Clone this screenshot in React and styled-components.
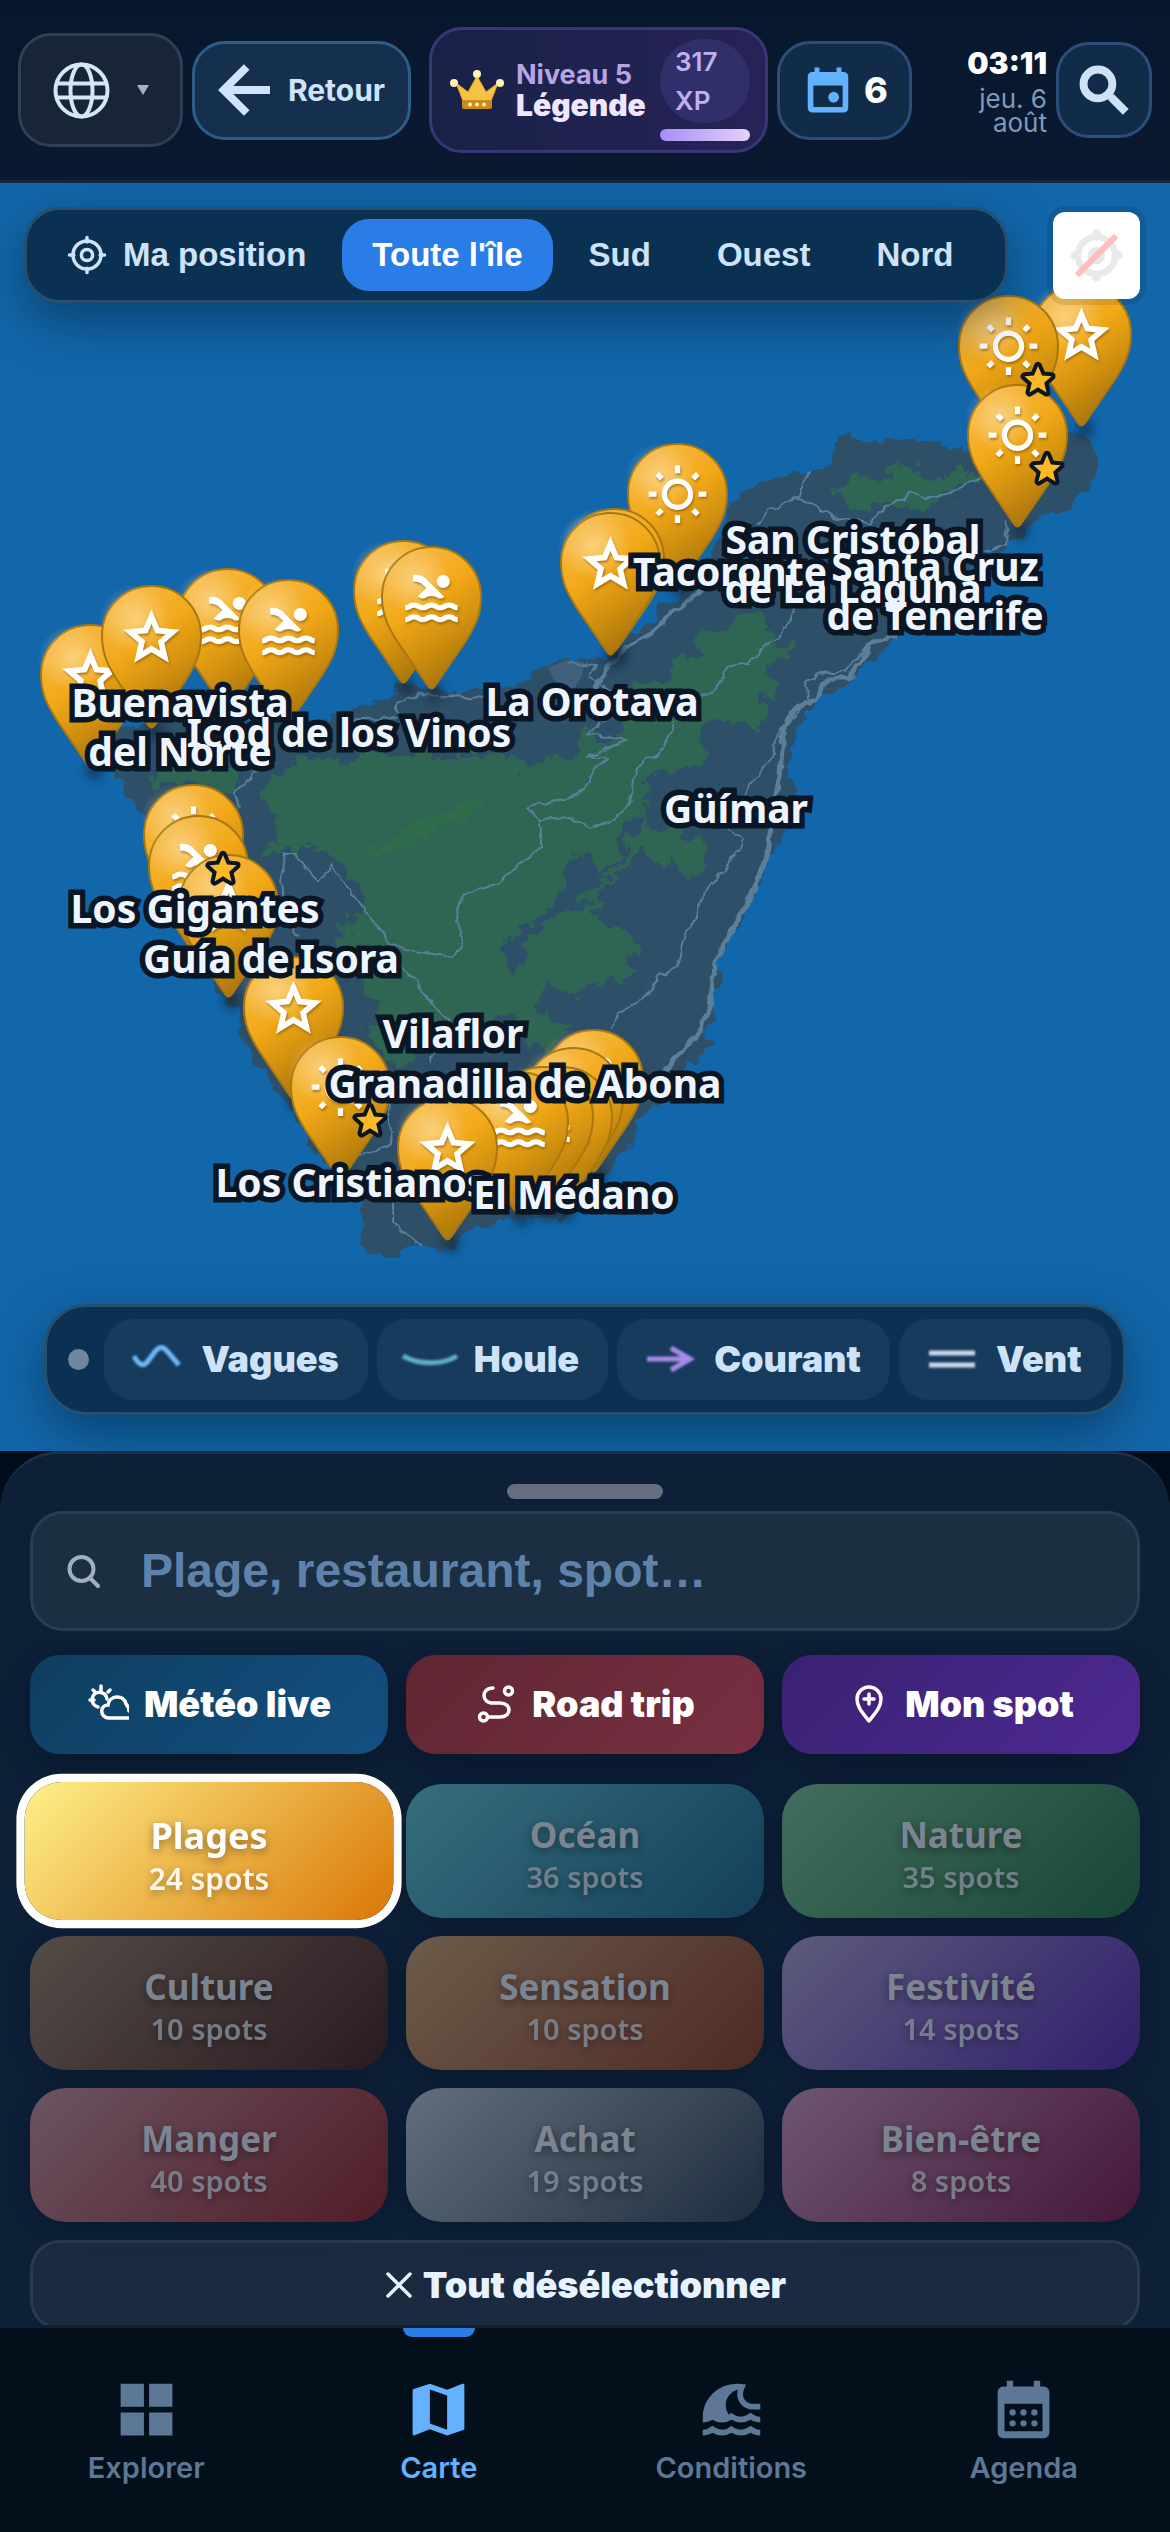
import React from 'react'
import styled, { createGlobalStyle, css } from 'styled-components'
import { MdMap, MdOutlineWbSunny, MdPool, MdSearch, MdStarBorder, MdTsunami } from 'react-icons/md'

const GlobalStyle = createGlobalStyle`
  * {
    box-sizing: border-box;
  }
  body {
    margin: 0;
    background: #020d1c;
    font-family: Inter, sans-serif;
  }
  button, input {
    font-family: inherit;
    margin: 0;
  }
  button {
    border: 0;
    cursor: pointer;
  }
  svg {
    display: block;
    flex: none;
  }
`
const Page = styled.div`
  display: flex;
  flex-direction: column;
  height: 100vh;
  overflow: hidden;
`

/* header */
const Header = styled.header`
  display: flex;
  align-items: center;
  gap: 9px;
  padding: 27px 18px;
  background: linear-gradient(#07182e, #0a1930);
  border-bottom: 3px solid #11273c;
`
const HeaderButton = styled.button`
  display: flex;
  align-items: center;
  justify-content: center;
  flex: none;
  min-width: 135px;
  height: 99px;
  padding: 0 18px;
  gap: 9px;
  border: 3px solid #2b4f78;
  border-radius: 33px;
  background: #112c49;
  color: #ffffff;
  font-size: 36px;
  font-weight: 800;
`
const LangButton = styled(HeaderButton)`
  width: 165px;
  height: 114px;
  gap: 27px;
  border-color: #303f53;
  background: #182536;
`
const BackButton = styled(HeaderButton)`
  width: 219px;
  gap: 18px;
  margin-right: 9px;
  border-color: #2e5d88;
  background: #15304f;
  color: #cfe3fb;
  font-size: 30px;
  font-weight: 700;
`
const SearchButton = styled(HeaderButton)`
  min-width: 96px;
  height: 96px;
  padding: 0;
  color: #cfe1f5;
  path[fill='none'] {
    stroke: none;
  }
`
const Level = styled.div`
  display: flex;
  align-items: center;
  flex: none;
  gap: 12px;
  width: 339px;
  height: 126px;
  padding: 9px 15px 9px 18px;
  border: 3px solid #39367a;
  border-radius: 33px;
  background: linear-gradient(90deg, #182247, #282258);
`
const LevelText = styled.div`
  display: flex;
  flex-direction: column;
  font-size: 30px;
  line-height: 30px;
  font-weight: 900;
  color: #efe6ff;
`
const LevelRank = styled.span`
  font-size: 27px;
  font-weight: 700;
  color: #b7a4e4;
`
const Experience = styled.div`
  display: flex;
  flex-direction: column;
  flex: none;
  gap: 6px;
  width: 90px;
  margin-left: auto;
`
const Points = styled.span`
  padding: 3px 15px;
  border-radius: 45px;
  background: #2f3069;
  color: #c2aef2;
  font-size: 26px;
  line-height: 39px;
  font-weight: 600;
`
const Progress = styled.div`
  height: 12px;
  border-radius: 6px;
  background: linear-gradient(90deg, #a98df8, #e4d2fb);
`
const Clock = styled.div`
  flex: 1;
  min-width: 0;
  padding-left: 36px;
  text-align: right;
  color: #7f9bb9;
  font-size: 26px;
  line-height: 24px;
`
const Time = styled.div`
  margin-bottom: 6px;
  color: #ffffff;
  font-size: 30px;
  line-height: 36px;
  font-weight: 900;
`

/* map */
const MapArea = styled.main`
  position: relative;
  display: flex;
  flex-direction: column;
  justify-content: space-between;
  flex: 16 1 0;
  min-height: 0;
  overflow: hidden;
  background: #1267ab;
`
const MapLayer = styled.div`
  position: absolute;
  top: 0;
  left: 50%;
  width: 1170px;
  height: 1269px;
  transform: translateX(-50%);
  isolation: isolate;
`
const Pin = styled.button`
  position: absolute;
  left: ${p => p.$x - 50}px;
  top: ${p => p.$y}px;
  display: flex;
  align-items: flex-start;
  justify-content: center;
  width: 101px;
  height: 143px;
  padding: 21px 0 0;
  background: none;
  color: #ffffff;
  isolation: isolate;
`
const PinShape = styled.span`
  position: absolute;
  inset: 0;
  z-index: -1;
`
const PinBody = styled.span`
  display: block;
  filter: drop-shadow(1px 2px 1px rgba(110, 70, 0, 0.5));
  path[fill='none'] {
    stroke: none;
  }
`
const Badge = styled.span`
  position: absolute;
  left: ${p => p.$x + 10}px;
  top: ${p => p.$y + 65}px;
`
const Place = styled.span`
  position: absolute;
  left: ${p => p.$x}px;
  top: ${p => p.$y}px;
  transform: translate(-50%, -39px);
  color: #eff5ff;
  font-family: 'Noto Sans', sans-serif;
  font-size: 39px;
  line-height: 48px;
  font-weight: 700;
  white-space: pre;
`
const Halo = styled(Place)`
  color: #0a1624;
  -webkit-text-stroke: 11px #0a1624;
  stroke-linejoin: round;
  user-select: none;
  &::before {
    content: '${p => p.$text}';
  }
`
const MapTop = styled.div`
  position: relative;
  display: flex;
  align-items: center;
  gap: 45px;
  padding: 24px 30px 24px 24px;
`
const floating = css`
  display: flex;
  align-items: center;
  border: 3px solid #25506f;
  background: #0a3152;
  box-shadow: 0 18px 54px rgba(2, 20, 36, 0.45);
`
const RegionBar = styled.nav`
  ${floating}
  flex: 1;
  gap: 6px;
  padding: 9px;
  border-radius: 36px;
`
const RegionButton = styled.button`
  display: flex;
  align-items: center;
  gap: 15px;
  height: 72px;
  padding: 0 30px;
  border-radius: 27px;
  background: ${p => p.$active ? '#2a7de6' : 'none'};
  color: ${p => p.$active ? '#ffffff' : '#cfe3f8'};
  font-family: 'Liberation Sans', sans-serif;
  font-size: 33px;
  font-weight: 700;
`
const LocateButton = styled.button`
  width: 87px;
  height: 87px;
  padding: 0;
  border-radius: 12px;
  background: #ffffff;
  box-shadow: 0 0 0 6px rgba(0, 0, 0, 0.1);
`
const LayerBar = styled.div`
  ${floating}
  position: relative;
  align-self: center;
  gap: 9px;
  margin-bottom: 36px;
  padding: 12px;
  border-radius: 42px;
`
const Dot = styled.span`
  width: 21px;
  height: 21px;
  margin: 0 6px 0 9px;
  border-radius: 50%;
  background: #70869e;
`
const LayerButton = styled.button`
  display: flex;
  align-items: center;
  gap: 20px;
  height: 81px;
  padding: 0 29px;
  border-radius: 30px;
  background: #173b5d;
  color: #cfe3f8;
  font-size: 36px;
  font-weight: 900;
  svg {
    overflow: visible;
    filter: blur(1px);
  }
`

/* sheet */
const Sheet = styled.section`
  flex: 11 1 0;
  min-height: 0;
  overflow: hidden;
  border-top: 3px solid #1e3048;
  border-radius: 60px 60px 0 0;
  background: #0d2038;
`
const SheetBody = styled.div`
  padding: 30px 30px 0;
`
const Handle = styled.div`
  width: 156px;
  height: 15px;
  margin: 0 auto 12px;
  border-radius: 8px;
  background: #636f7f;
`
const SearchField = styled.label`
  display: flex;
  align-items: center;
  gap: 39px;
  height: 120px;
  padding: 0 33px;
  border: 3px solid #2a3d52;
  border-radius: 33px;
  background: #1b2e42;
`
const SearchInput = styled.input`
  flex: 1;
  min-width: 0;
  padding: 0;
  border: 0;
  outline: 0;
  background: none;
  color: #e6f1ff;
  font-family: 'Liberation Sans', sans-serif;
  font-size: 48px;
  font-weight: 700;
  &::placeholder {
    color: #5f82ab;
    opacity: 1;
  }
`
const Grid = styled.div`
  display: grid;
  grid-template-columns: repeat(3, minmax(0, 1fr));
  gap: 18px;
  margin-top: ${p => p.$top}px;
`
const Action = styled.button`
  display: flex;
  align-items: center;
  justify-content: center;
  gap: 15px;
  height: 99px;
  border-radius: 30px;
  background: linear-gradient(135deg, ${p => p.$from}, ${p => p.$to});
  box-shadow: 0 12px 30px rgba(2, 12, 28, 0.4);
  color: #ffffff;
  font-size: 36px;
  font-weight: 900;
`
const Category = styled.button`
  display: flex;
  flex-direction: column;
  align-items: center;
  justify-content: center;
  height: 134px;
  padding-top: 8px;
  border-radius: 36px;
  background: linear-gradient(135deg, ${p => p.$from}, ${p => p.$to});
  box-shadow: 0 6px 24px rgba(2, 12, 28, 0.3);
  color: #7b8490;
  font-family: 'Noto Sans', sans-serif;
  text-shadow: 0 3px 9px rgba(0, 0, 0, 0.4);
  ${p => p.$active && css`
    color: #ffffff;
    transform: scale(1.03);
    box-shadow: 0 0 0 8px #ffffff;
  `}
`
const CategoryName = styled.span`
  font-size: 35px;
  line-height: 45px;
  font-weight: 700;
`
const CategoryCount = styled.span`
  font-size: 29px;
  line-height: 39px;
  font-weight: 600;
  opacity: 0.9;
`
const ClearButton = styled.button`
  display: flex;
  align-items: center;
  justify-content: center;
  gap: 9px;
  width: 100%;
  height: 90px;
  margin-top: 18px;
  border: 3px solid #2a394f;
  border-radius: 30px;
  background: #1a2a40;
  color: #e8f3ff;
  font-size: 36px;
  font-weight: 900;
`

/* bottom navigation */
const TabBar = styled.nav`
  display: grid;
  grid-template-columns: repeat(4, 1fr);
  flex: none;
  height: 207px;
  border-top: 3px solid #121f2e;
  background: #03101c;
`
const Tab = styled.a`
  position: relative;
  display: flex;
  flex-direction: column;
  align-items: center;
  gap: 6px;
  padding-top: 47px;
  color: ${p => p.$active ? '#63b1ff' : '#5c7896'};
  font-size: 29px;
  line-height: 36px;
  font-weight: 600;
  text-decoration: none;
  ${p => p.$active && css`
    &::before {
      content: '';
      position: absolute;
      top: 0;
      width: 72px;
      height: 9px;
      border-radius: 0 0 9px 9px;
      background: #2a7de6;
    }
  `}
`

const places = [
  ['Buenavista', 180, 534],
  ['del Norte', 180, 583],
  ['Icod de los Vinos', 349, 564],
  ['Los Gigantes', 195, 740],
  ['Guía de Isora', 271, 790],
  ['Vilaflor', 453, 865],
  ['Granadilla de Abona', 525, 915],
  ['Los Cristianos', 351, 1014],
  ['La Orotava', 592, 533],
  ['Güímar', 736, 640],
  ['San Cristóbal', 853, 371],
  ['de La Laguna', 853, 420],
  ['Tacoronte', 730, 403],
  ['Santa Cruz', 935, 398],
  ['de Tenerife', 935, 447],
]
const coastPlaces = [['El Médano', 574, 1026]]

const pins = [
  ['star', 1081, 100],
  ['sun', 1008, 112, true],
  ['sun', 1017, 201, true],
  ['sun', 677, 260],
  ['sun', 614, 325],
  ['star', 610, 329],
  ['swim', 403, 357],
  ['swim', 431, 363],
  ['swim', 227, 385],
  ['swim', 288, 396],
  ['star', 90, 441],
  ['star', 151, 402],
  ['sun', 193, 601, true],
  ['swim', 198, 632],
  ['star', 228, 671],
  ['star', 293, 773],
  ['sun', 340, 853, true],
  ['swim', 593, 846],
  ['sun', 573, 864],
  ['swim', 562, 883],
  ['swim', 543, 883],
  ['swim', 518, 888],
  ['star', 447, 914],
]
const pinIcons = {
  star: <MdStarBorder size={63} strokeWidth={0.6} />,
  sun: <MdOutlineWbSunny size={63} />,
  swim: <MdPool size={63} />,
}

const categories = [
  ['Plages', 24, '#fff08a', '#d97706'],
  ['Océan', 36, '#366e7d', '#133f58'],
  ['Nature', 35, '#436e5d', '#174536'],
  ['Culture', 10, '#544c47', '#2a1a20'],
  ['Sensation', 10, '#6c5b4a', '#4e2a25'],
  ['Festivité', 14, '#5c5b7b', '#311f6c'],
  ['Manger', 40, '#6b5461', '#501c27'],
  ['Achat', 19, '#626e7c', '#1e2d3e'],
  ['Bien-être', 8, '#6d5672', '#451838'],
]

const Globe = () => (
  <svg width='57' height='57' viewBox='0 0 57 57' fill='none' stroke='#d6e6fa' strokeWidth='4'>
    <circle cx='28.5' cy='28.5' r='26' />
    <ellipse cx='28.5' cy='28.5' rx='11' ry='26' />
    <path d='M4 21.5h49M4 35.5h49' />
  </svg>
)
const Caret = () => (
  <svg width='12' height='10' viewBox='0 0 12 10'>
    <path d='M0 0h12L6 10z' fill='#a3b3c6' />
  </svg>
)
const BackArrow = () => (
  <svg width='52' height='52' viewBox='0 0 52 52' fill='none' stroke='#cfe3fb' strokeWidth='8'>
    <path d='M28.7 3 5.7 26l23 23M6 26h46' />
  </svg>
)
const Crown = () => (
  <svg width='54' height='42' viewBox='0 0 54 42'>
    <path d='M6 14 18 23 27 7l9 16 12-9-7 18H13z' fill='#f5c242' stroke='#e0a52c' />
    <path d='M12 31h30v7q0 2-2 2H14q-2 0-2-2z' fill='#c98a1e' />
    <circle cx='27' cy='5' r='4' fill='#fdf3b5' />
    <circle cx='4' cy='14' r='4' fill='#fdf3b5' />
    <circle cx='50' cy='14' r='4' fill='#fdf3b5' />
    <circle cx='20' cy='35.500' r='2' fill='#fdf3b5' />
    <circle cx='27' cy='35.500' r='2' fill='#fdf3b5' />
    <circle cx='34' cy='35.500' r='2' fill='#fdf3b5' />
  </svg>
)
const CalendarDay = () => (
  <svg width='54' height='54' viewBox='0 0 24 24' fill='#63b1ff'>
    <path fillRule='evenodd' d='M6 2h2.200v2h7.600V2H18v2h1a2 2 0 0 1 2 2v14a2 2 0 0 1-2 2H5a2 2 0 0 1-2-2V6a2 2 0 0 1 2-2h1zM5.500 10v9.500h13V10z' />
    <circle cx='14.500' cy='15.200' r='2.400' />
  </svg>
)
const CalendarMonth = () => (
  <svg width='69' height='69' viewBox='0 0 24 24' fill='currentColor'>
    <path fillRule='evenodd' d='M6.200 2h2.200v2h7.200V2h2.200v2H19a2 2 0 0 1 2 2v14a2 2 0 0 1-2 2H5a2 2 0 0 1-2-2V6a2 2 0 0 1 2-2h1.200zM5.400 10v9.600h13.200V10z' />
    {[8.2, 12, 15.8].map(x => [13, 16.8].map(y => <circle key={x + y} cx={x} cy={y} r='1.100' />))}
  </svg>
)
const Squares = () => (
  <svg width='69' height='69' viewBox='0 0 24 24' fill='currentColor'>
    <path d='M3 3h8.100v8H3zM12.900 3H21v8h-8.100zM3 13h8.100v8H3zM12.900 13H21v8h-8.100z' />
  </svg>
)
const Crosshair = () => (
  <svg width='42' height='42' viewBox='0 0 24 24' fill='none' stroke='currentColor' strokeWidth='2' strokeLinecap='round'>
    <circle cx='12' cy='12' r='8' />
    <circle cx='12' cy='12' r='3.200' />
    <path d='M12 2v2.500M12 19.500V22M2 12h2.500M19.500 12H22' />
  </svg>
)
const LocateOff = () => (
  <svg width='87' height='87' viewBox='0 0 20 20' opacity='0.25'>
    <path fillRule='evenodd' fill='#aaaaaa' d='M10 4C9 4 9 5 9 5v.1A5 5 0 0 0 5.100 9H5s-1 0-1 1 1 1 1 1h.1A5 5 0 0 0 9 14.900v.1s0 1 1 1 1-1 1-1v-.1a5 5 0 0 0 3.900-3.900h.1s1 0 1-1-1-1-1-1h-.1A5 5 0 0 0 11 5.100V5s0-1-1-1zm0 2.500a3.500 3.500 0 1 1 0 7 3.500 3.500 0 1 1 0-7z' />
    <circle cx='10' cy='10' r='2' fill='#aaaaaa' />
    <path d='M14 5l1 1-9 9-1-1 9-9z' fill='#ff0000' />
  </svg>
)
const layers = [
  ['Vagues', '#6db8f8', 'M1 9c4 8 9 12 14 5l6-8c5-7 9-7 13-2l12 14'],
  ['Houle', '#5fb0c0', 'M-3 9c16 9 40 9 54 0'],
  ['Courant', '#a78bea', 'M1 12h43M25 1l19 11-19 11'],
  ['Vent', '#c9daee', 'M1 6h46M1 18h46'],
]
const WeatherIcon = () => (
  <svg width='42' height='42' viewBox='0 0 42 42' fill='none' stroke='#ffffff' strokeWidth='3.500' strokeLinecap='round'>
    <path d='M14 3v4M6 7l2 2M3 17h4M23 7l-2 2' />
    <path d='M11 24a7.500 7.500 0 1 1 9-8' />
    <path d='M42 35H22c-9 0-10-13-1-13 1-10 16-11 18-1 2 2 3 4 3 7' />
  </svg>
)
const RouteIcon = () => (
  <svg width='42' height='42' viewBox='0 0 42 42' fill='none' stroke='#ffffff' strokeWidth='3.500' strokeLinecap='round'>
    <circle cx='33.500' cy='8' r='4' />
    <circle cx='8.500' cy='34' r='4' />
    <path d='M18 5c-12 0-12 15 0 15h7c12 0 12 14 0 14H13' />
  </svg>
)
const SpotIcon = () => (
  <svg width='42' height='42' viewBox='0 0 42 42' fill='none' stroke='#ffffff' strokeWidth='3.500' strokeLinecap='round' strokeLinejoin='round'>
    <path d='M21 38C16 31 9 25 9 16a12 12 0 0 1 24 0c0 9-7 15-12 22zM21 11v10M16 16h10' />
  </svg>
)
const Cross = () => (
  <svg width='30' height='30' viewBox='0 0 30 30' stroke='#e8f3ff' strokeWidth='3.500' strokeLinecap='round'>
    <path d='M4 4l22 22M26 4 4 26' />
  </svg>
)
const Lens = () => (
  <svg width='36' height='36' viewBox='0 0 36 36' fill='none' stroke='#9fb0c1' strokeWidth='4' strokeLinecap='round'>
    <circle cx='15.500' cy='16' r='12' />
    <path d='M24.500 25.500 32 33' />
  </svg>
)

const PinDrawing = () => (
  <svg width='101' height='143' viewBox='0 0 101 143' overflow='visible'>
    <ellipse cx='54' cy='146' rx='9' ry='10' fill='#0b2137' opacity='0.55' filter='url(#soft)' />
    <path
      d='M1 51C1 23 23 1 50.500 1S100 23 100 51C100 70 93 82 85 95L54 140Q50.500 145 47 140L16 95C8 82 1 70 1 51z'
      fill='url(#gold)'
      stroke='#a8770f'
      strokeWidth='2'
    />
    <ellipse cx='34' cy='34' rx='36' ry='34' fill='url(#shine)' />
  </svg>
)

const Island = () => (
  <svg width='1170' height='1269' viewBox='0 183 1170 1269'>
    <defs>
      <linearGradient id='gold' x1='0.2' y1='0' x2='0.7' y2='1'>
        <stop offset='0' stopColor='#f6bb4c' />
        <stop offset='0.4' stopColor='#f2a918' />
        <stop offset='0.65' stopColor='#d4920f' />
        <stop offset='0.95' stopColor='#a8740b' />
      </linearGradient>
      <radialGradient id='shine'>
        <stop offset='0' stopColor='#ffe5b0' stopOpacity='0.6' />
        <stop offset='1' stopColor='#ffe5b0' stopOpacity='0' />
      </radialGradient>
      <filter id='soft' x='-1' y='-1' width='3' height='3'>
        <feGaussianBlur stdDeviation='5' />
      </filter>
      <filter id='coast' x='0' y='0' width='1' height='1'>
        <feTurbulence type='fractalNoise' baseFrequency='0.07' numOctaves='3' seed='4' />
        <feDisplacementMap in='SourceGraphic' scale='15' xChannelSelector='R' yChannelSelector='G' />
      </filter>
      <filter id='forest' x='0' y='0' width='1' height='1'>
        <feTurbulence type='fractalNoise' baseFrequency='0.06' numOctaves='4' seed='9' />
        <feDisplacementMap in='SourceGraphic' scale='30' xChannelSelector='R' yChannelSelector='G' />
      </filter>
      <filter id='road' x='-0.1' y='-0.1' width='1.2' height='1.2'>
        <feTurbulence type='fractalNoise' baseFrequency='0.08' numOctaves='2' seed='2' />
        <feDisplacementMap in='SourceGraphic' scale='9' xChannelSelector='R' yChannelSelector='G' />
      </filter>
    </defs>
    <path
      filter='url(#coast)'
      fill='#2f5068'
      d='M100 733 126 727 149 723 168 720 191 717 240 722 291 720 329 717 344 708 367 705 390 697 398 683 429 687 452 693 480 693 515 687 530 674 547 665 566 659 583 660 607 657 630 633 653 623 661 603 677 600 700 577 716 543 727 510 740 496 758 483 778 477 809 472 831 460 833 436 848 432 858 437 879 443 889 438 910 438 941 443 965 450 1000 445 1040 440 1077 433 1091 443 1098 463 1087 483 1091 493 1075 500 1070 512 1046 513 1027 527 1003 548 984 555 960 580 930 605 895 637 883 650 856 673 848 685 820 697 797 726 790 750 787 766 795 791 790 824 777 844 767 856 760 885 733 930 715 962 720 975 717 987 710 1003 715 1015 705 1032 717 1044 697 1058 682 1073 657 1107 635 1122 633 1140 622 1150 607 1175 577 1191 560 1221 540 1216 501 1220 482 1229 465 1232 457 1243 444 1250 417 1245 406 1250 398 1258 383 1258 369 1253 361 1239 363 1215 360 1200 340 1180 318 1156 285 1101 268 1077 245 1046 237 1012 220 996 200 960 180 920 160 870 143 827 142 812 128 797 115 773z'
    />
    <path d='M548 668 566 660 584 662 582 676 572 692 560 690z' fill='#40607d' />
    <path
      filter='url(#forest)'
      fill='#2d6653'
      fillRule='evenodd'
      d='M291 762 329 757 344 765 367 753 413 757 455 753 509 755 524 767 555 763 580 748 580 726 600 738 623 738 628 722 627 683 667 683 677 664 700 650 696 627 727 633 739 608 758 608 770 633 790 650 774 667 763 664 777 685 763 697 767 718 747 728 703 718 700 734 708 754 700 767 650 775 640 803 633 820 673 832 697 836 710 850 705 862 693 877 650 860 640 848 607 889 587 909 623 934 637 946 623 979 600 983 573 995 543 979 537 1007 568 1032 547 1054 528 1036 512 1012 470 1020 420 1040 400 1070 367 1036 379 1019 367 991 337 943 352 936 333 919 367 915 360 888 333 860 318 850 260 850 275 843 275 812 260 798 275 784zM566 864 573 850 590 862 603 876 617 855 642 800 650 800 628 852 605 882 590 895 540 930 520 950 517 975 499 948 528 929 551 905 564 888zM142 777 157 767 230 767 240 778 230 800 199 783 172 783zM828 490 856 478 891 477 891 455 902 468 922 467 934 480 953 470 980 470 980 480 949 493 922 510 891 507 840 510 844 497z'
    />
    <path filter='url(#forest)' fill='#2d6e49' opacity='0.8' d='M356 860 394 840 432 815 494 790 467 817 390 852z' />
    <g fill='none' stroke='#5b7f99' strokeLinejoin='round' strokeLinecap='round' filter='url(#road)'>
      <path strokeWidth='5' d='M895 635 870 644 860 664 847 679 827 679 810 705 793 709 783 734 780 775 770 824 767 856 750 897 733 930 715 962 710 1007 700 1032 680 1052 663 1073' />
      <path strokeWidth='4' d='M704 590 673 610 653 633 622 650 607 670 595 690' />
      <path strokeWidth='2' d='M810 472 799 497 770 510 757 525M799 499 822 510 845 520 870 523 880 510 905 497 912 490 925 499 950 493 980 478M1007 520 1005 545 984 552M800 600 790 620 778 640 760 650 747 664 727 668 715 690 700 697M877 640 868 644 845 672 827 672 807 681 808 701 780 730 770 762 747 787 727 828 745 840 730 864 710 885 697 909 683 942 677 966 660 975 643 999 617 1015 613 1030' />
      <path strokeWidth='2' d='M673 722 660 754 647 758 633 779 630 803 613 820 590 828 570 818 540 820 527 807 567 799 583 791 593 771 607 758 587 758 627 740 587 734 610 715M540 820 540 848 524 860 497 884 463 895 457 915 463 946 452 957 406 950 390 943 363 908 344 884 331 864 321 881 308 872 295 853 285 853 282 884 285 910 298 936M398 957 421 991 436 1008 450 1019 430 1060M354 1156 375 1152 392 1144 388 1100M394 1190 394 1222 421 1246M256 772 235 793 239 807M568 663 595 665 590 678 610 690M490 698 421 695 398 703 398 717 344 720 340 733 352 740' />
    </g>
  </svg>
)

const BadgeStar = () => (
  <svg width='40' height='40' viewBox='0 0 40 40'>
    <path
      d='M20 6l4 9.500 9.500.8-7.300 6.400 2.300 9.800-8.500-5.200-8.500 5.200 2.300-9.800-7.300-6.400 9.500-.8z'
      fill='#fdb827'
      stroke='#0a1624'
      strokeWidth='8'
      strokeLinejoin='round'
      paintOrder='stroke'
    />
  </svg>
)

const renderHalos = list => list.map(([name, x, y]) => <Halo key={name} $x={x} $y={y} $text={name} aria-hidden='true' />)
const renderPlaces = list => list.map(([name, x, y]) => <Place key={name} $x={x} $y={y}>{name}</Place>)

class App extends React.Component {
  constructor(props) {
    super(props)
    this.state = {
      search: '',
      region: "Toute l'île",
      category: 'Plages',
    }
    this.handleSearch = this.handleSearch.bind(this)
    this.clearCategory = this.clearCategory.bind(this)
  }
  handleSearch(e) {
    this.setState({ search: e.target.value })
  }
  clearCategory() {
    this.setState({ category: null })
  }
  renderRegion(name, icon) {
    return (
      <RegionButton key={name} $active={this.state.region === name} onClick={() => this.setState({ region: name })}>
        {icon}
        {name}
      </RegionButton>
    )
  }
  render() {
    return (
      <Page>
        <GlobalStyle />
        <Header>
          <LangButton aria-label='Langue'><Globe /><Caret /></LangButton>
          <BackButton><BackArrow />Retour</BackButton>
          <Level>
            <Crown />
            <LevelText>
              <LevelRank>Niveau 5</LevelRank>
              Légende
            </LevelText>
            <Experience>
              <Points>317 XP</Points>
              <Progress />
            </Experience>
          </Level>
          <HeaderButton><CalendarDay />6</HeaderButton>
          <Clock>
            <Time>03:11</Time>
            jeu. 6 août
          </Clock>
          <SearchButton aria-label='Rechercher'><MdSearch size={63} strokeWidth={1} /></SearchButton>
        </Header>

        <MapArea>
          <MapLayer>
            <Island />
            {pins.map(([icon, x, y]) => (
              <Pin key={x} $x={x} $y={y} aria-label={icon}>
                <PinShape><PinDrawing /></PinShape>
                <PinBody>{pinIcons[icon]}</PinBody>
              </Pin>
            ))}
            {pins.filter(pin => pin[3]).map(([icon, x, y]) => (
              <Badge key={x} $x={x} $y={y}><BadgeStar /></Badge>
            ))}
          </MapLayer>
          <MapLayer>
            {renderHalos(places)}
            {renderPlaces(places)}
            {renderHalos(coastPlaces)}
            {renderPlaces(coastPlaces)}
          </MapLayer>
          <MapTop>
            <RegionBar>
              {this.renderRegion('Ma position', <Crosshair />)}
              {["Toute l'île", 'Sud', 'Ouest', 'Nord'].map(name => this.renderRegion(name))}
            </RegionBar>
            <LocateButton aria-label='Localiser' disabled><LocateOff /></LocateButton>
          </MapTop>
          <LayerBar>
            <Dot />
            {layers.map(([name, color, d]) => (
              <LayerButton key={name}>
                <svg width='48' height='24' viewBox='0 0 48 24' fill='none' stroke={color} strokeWidth='5'>
                  <path d={d} />
                </svg>
                {name}
              </LayerButton>
            ))}
          </LayerBar>
        </MapArea>

        <Sheet>
          <SheetBody>
            <Handle />
            <SearchField>
              <Lens />
              <SearchInput
                type='text'
                aria-label='Rechercher un spot'
                placeholder='Plage, restaurant, spot…'
                value={this.state.search}
                onChange={this.handleSearch}
              />
            </SearchField>
            <Grid $top={24}>
              <Action $from='#0e3e5f' $to='#135082'><WeatherIcon />Météo live</Action>
              <Action $from='#5f2632' $to='#793042'><RouteIcon />Road trip</Action>
              <Action $from='#3a2172' $to='#4d2992'><SpotIcon />Mon spot</Action>
            </Grid>
            <Grid $top={30}>
              {categories.map(([name, count, from, to]) => (
                <Category
                  key={name}
                  $from={from}
                  $to={to}
                  $active={this.state.category === name}
                  onClick={() => this.setState({ category: name })}
                >
                  <CategoryName>{name}</CategoryName>
                  <CategoryCount>{count} spots</CategoryCount>
                </Category>
              ))}
            </Grid>
            <ClearButton onClick={this.clearCategory}><Cross />Tout désélectionner</ClearButton>
          </SheetBody>
        </Sheet>

        <TabBar>
          <Tab href='#explorer'><Squares />Explorer</Tab>
          <Tab href='#carte' $active><MdMap size={69} />Carte</Tab>
          <Tab href='#conditions'><MdTsunami size={69} />Conditions</Tab>
          <Tab href='#agenda'><CalendarMonth />Agenda</Tab>
        </TabBar>
      </Page>
    )
  }
}

export default App
